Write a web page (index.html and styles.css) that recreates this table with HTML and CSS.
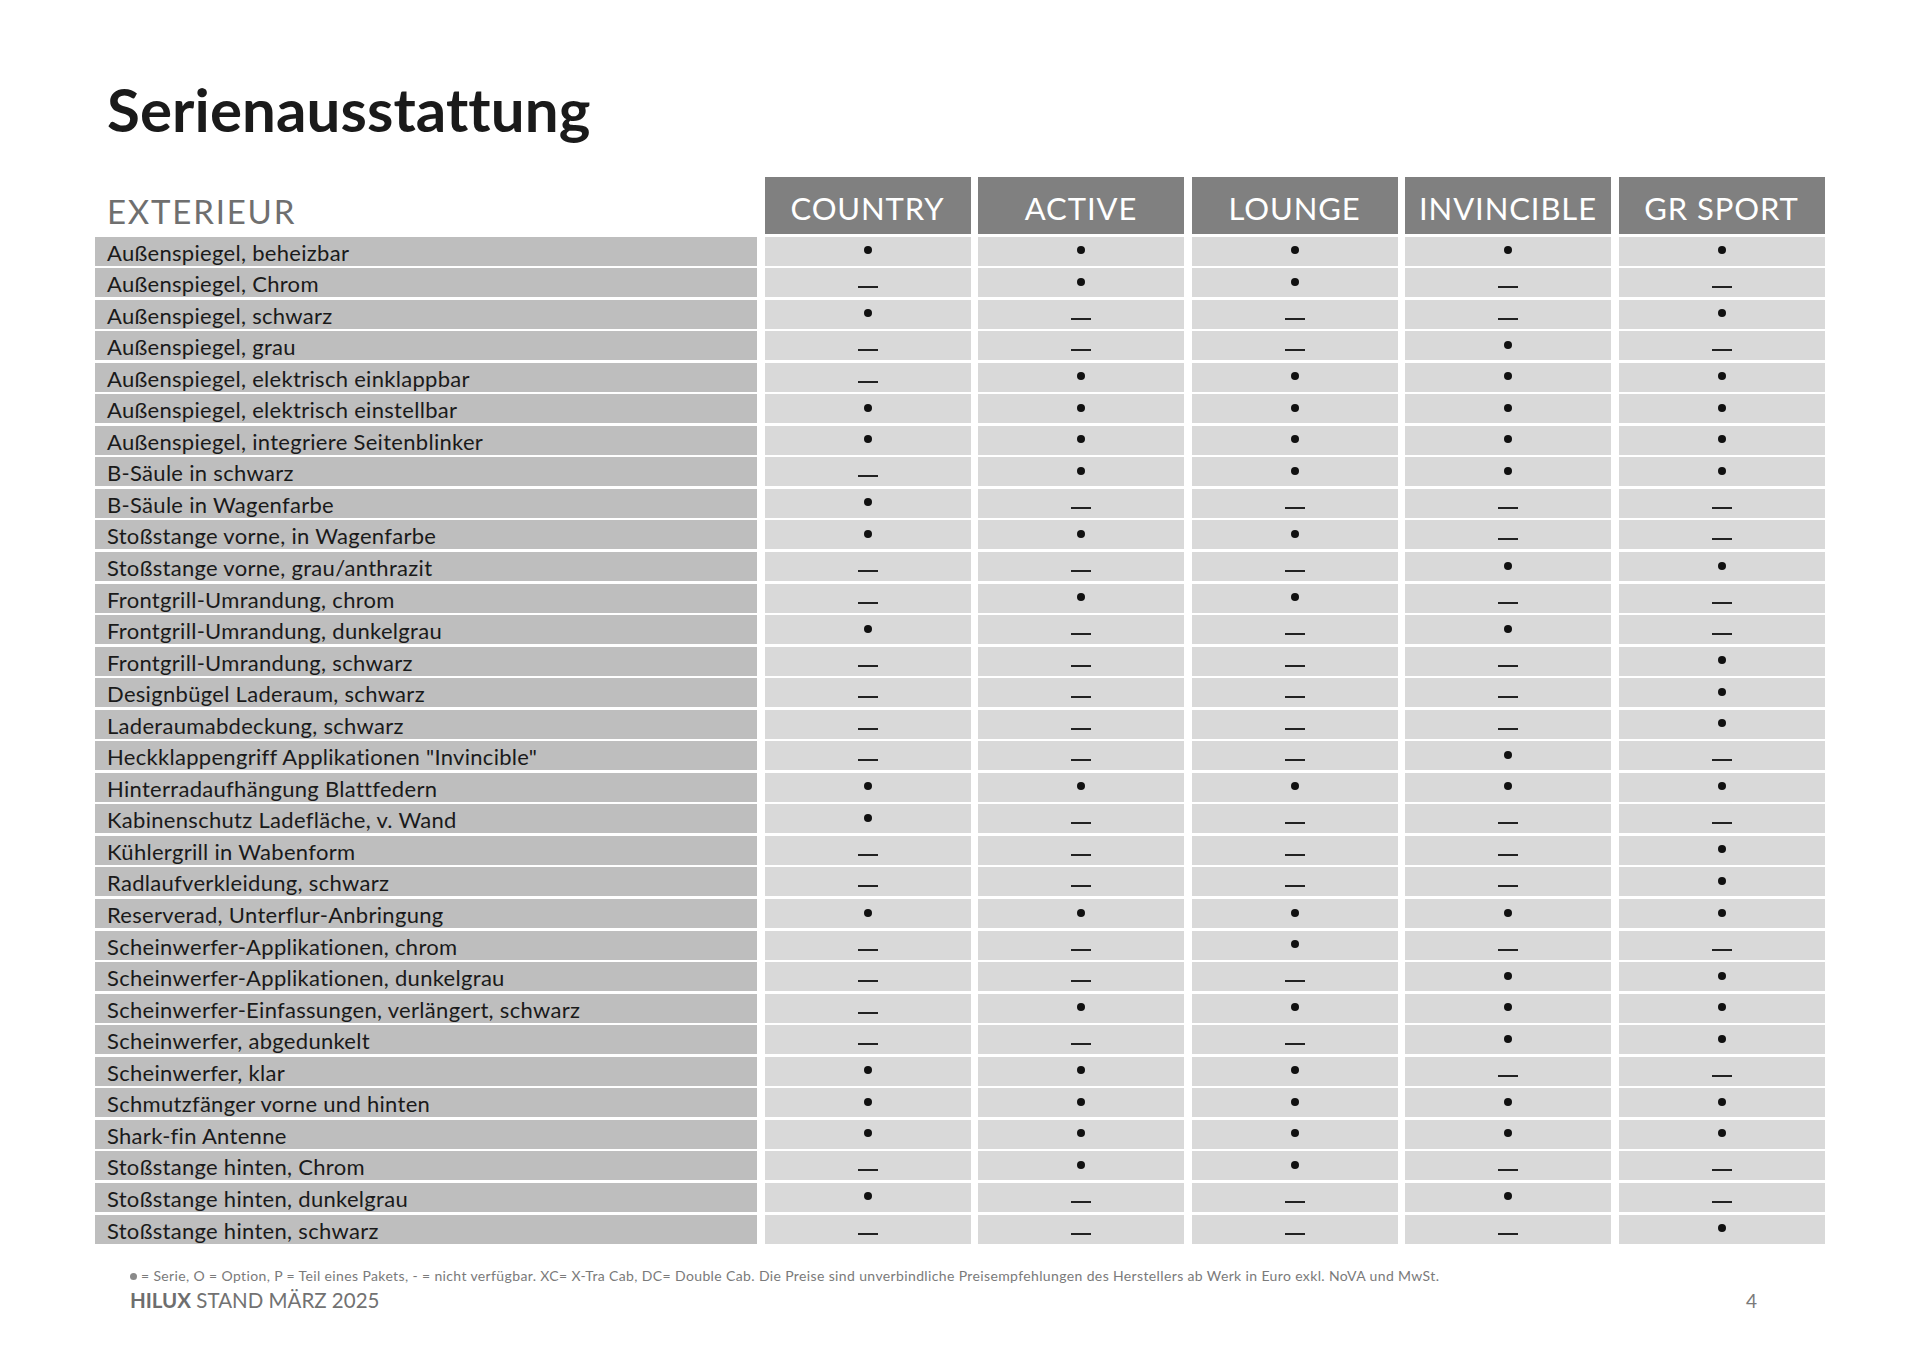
FILE: index.html
```html
<!DOCTYPE html>
<html lang="de">
<head>
<meta charset="utf-8">
<title>Serienausstattung</title>
<link rel="stylesheet" href="styles.css">
</head>
<body>
<main class="page">
  <h1 class="title">Serienausstattung</h1>
  <div class="table">
    <div class="head-label">EXTERIEUR</div>
    <div class="head">COUNTRY</div>
    <div class="head">ACTIVE</div>
    <div class="head">LOUNGE</div>
    <div class="head">INVINCIBLE</div>
    <div class="head">GR SPORT</div>

    <div class="label">Außenspiegel, beheizbar</div>
    <div class="cell"><span class="dot"></span></div><div class="cell"><span class="dot"></span></div><div class="cell"><span class="dot"></span></div><div class="cell"><span class="dot"></span></div><div class="cell"><span class="dot"></span></div>

    <div class="label">Außenspiegel, Chrom</div>
    <div class="cell"><span class="dash"></span></div><div class="cell"><span class="dot"></span></div><div class="cell"><span class="dot"></span></div><div class="cell"><span class="dash"></span></div><div class="cell"><span class="dash"></span></div>

    <div class="label">Außenspiegel, schwarz</div>
    <div class="cell"><span class="dot"></span></div><div class="cell"><span class="dash"></span></div><div class="cell"><span class="dash"></span></div><div class="cell"><span class="dash"></span></div><div class="cell"><span class="dot"></span></div>

    <div class="label">Außenspiegel, grau</div>
    <div class="cell"><span class="dash"></span></div><div class="cell"><span class="dash"></span></div><div class="cell"><span class="dash"></span></div><div class="cell"><span class="dot"></span></div><div class="cell"><span class="dash"></span></div>

    <div class="label">Außenspiegel, elektrisch einklappbar</div>
    <div class="cell"><span class="dash"></span></div><div class="cell"><span class="dot"></span></div><div class="cell"><span class="dot"></span></div><div class="cell"><span class="dot"></span></div><div class="cell"><span class="dot"></span></div>

    <div class="label">Außenspiegel, elektrisch einstellbar</div>
    <div class="cell"><span class="dot"></span></div><div class="cell"><span class="dot"></span></div><div class="cell"><span class="dot"></span></div><div class="cell"><span class="dot"></span></div><div class="cell"><span class="dot"></span></div>

    <div class="label">Außenspiegel, integriere Seitenblinker</div>
    <div class="cell"><span class="dot"></span></div><div class="cell"><span class="dot"></span></div><div class="cell"><span class="dot"></span></div><div class="cell"><span class="dot"></span></div><div class="cell"><span class="dot"></span></div>

    <div class="label">B-Säule in schwarz</div>
    <div class="cell"><span class="dash"></span></div><div class="cell"><span class="dot"></span></div><div class="cell"><span class="dot"></span></div><div class="cell"><span class="dot"></span></div><div class="cell"><span class="dot"></span></div>

    <div class="label">B-Säule in Wagenfarbe</div>
    <div class="cell"><span class="dot"></span></div><div class="cell"><span class="dash"></span></div><div class="cell"><span class="dash"></span></div><div class="cell"><span class="dash"></span></div><div class="cell"><span class="dash"></span></div>

    <div class="label">Stoßstange vorne, in Wagenfarbe</div>
    <div class="cell"><span class="dot"></span></div><div class="cell"><span class="dot"></span></div><div class="cell"><span class="dot"></span></div><div class="cell"><span class="dash"></span></div><div class="cell"><span class="dash"></span></div>

    <div class="label">Stoßstange vorne, grau/anthrazit</div>
    <div class="cell"><span class="dash"></span></div><div class="cell"><span class="dash"></span></div><div class="cell"><span class="dash"></span></div><div class="cell"><span class="dot"></span></div><div class="cell"><span class="dot"></span></div>

    <div class="label">Frontgrill-Umrandung, chrom</div>
    <div class="cell"><span class="dash"></span></div><div class="cell"><span class="dot"></span></div><div class="cell"><span class="dot"></span></div><div class="cell"><span class="dash"></span></div><div class="cell"><span class="dash"></span></div>

    <div class="label">Frontgrill-Umrandung, dunkelgrau</div>
    <div class="cell"><span class="dot"></span></div><div class="cell"><span class="dash"></span></div><div class="cell"><span class="dash"></span></div><div class="cell"><span class="dot"></span></div><div class="cell"><span class="dash"></span></div>

    <div class="label">Frontgrill-Umrandung, schwarz</div>
    <div class="cell"><span class="dash"></span></div><div class="cell"><span class="dash"></span></div><div class="cell"><span class="dash"></span></div><div class="cell"><span class="dash"></span></div><div class="cell"><span class="dot"></span></div>

    <div class="label">Designbügel Laderaum, schwarz</div>
    <div class="cell"><span class="dash"></span></div><div class="cell"><span class="dash"></span></div><div class="cell"><span class="dash"></span></div><div class="cell"><span class="dash"></span></div><div class="cell"><span class="dot"></span></div>

    <div class="label">Laderaumabdeckung, schwarz</div>
    <div class="cell"><span class="dash"></span></div><div class="cell"><span class="dash"></span></div><div class="cell"><span class="dash"></span></div><div class="cell"><span class="dash"></span></div><div class="cell"><span class="dot"></span></div>

    <div class="label">Heckklappengriff Applikationen "Invincible"</div>
    <div class="cell"><span class="dash"></span></div><div class="cell"><span class="dash"></span></div><div class="cell"><span class="dash"></span></div><div class="cell"><span class="dot"></span></div><div class="cell"><span class="dash"></span></div>

    <div class="label">Hinterradaufhängung Blattfedern</div>
    <div class="cell"><span class="dot"></span></div><div class="cell"><span class="dot"></span></div><div class="cell"><span class="dot"></span></div><div class="cell"><span class="dot"></span></div><div class="cell"><span class="dot"></span></div>

    <div class="label">Kabinenschutz Ladefläche, v. Wand</div>
    <div class="cell"><span class="dot"></span></div><div class="cell"><span class="dash"></span></div><div class="cell"><span class="dash"></span></div><div class="cell"><span class="dash"></span></div><div class="cell"><span class="dash"></span></div>

    <div class="label">Kühlergrill in Wabenform</div>
    <div class="cell"><span class="dash"></span></div><div class="cell"><span class="dash"></span></div><div class="cell"><span class="dash"></span></div><div class="cell"><span class="dash"></span></div><div class="cell"><span class="dot"></span></div>

    <div class="label">Radlaufverkleidung, schwarz</div>
    <div class="cell"><span class="dash"></span></div><div class="cell"><span class="dash"></span></div><div class="cell"><span class="dash"></span></div><div class="cell"><span class="dash"></span></div><div class="cell"><span class="dot"></span></div>

    <div class="label">Reserverad, Unterflur-Anbringung</div>
    <div class="cell"><span class="dot"></span></div><div class="cell"><span class="dot"></span></div><div class="cell"><span class="dot"></span></div><div class="cell"><span class="dot"></span></div><div class="cell"><span class="dot"></span></div>

    <div class="label">Scheinwerfer-Applikationen, chrom</div>
    <div class="cell"><span class="dash"></span></div><div class="cell"><span class="dash"></span></div><div class="cell"><span class="dot"></span></div><div class="cell"><span class="dash"></span></div><div class="cell"><span class="dash"></span></div>

    <div class="label">Scheinwerfer-Applikationen, dunkelgrau</div>
    <div class="cell"><span class="dash"></span></div><div class="cell"><span class="dash"></span></div><div class="cell"><span class="dash"></span></div><div class="cell"><span class="dot"></span></div><div class="cell"><span class="dot"></span></div>

    <div class="label">Scheinwerfer-Einfassungen, verlängert, schwarz</div>
    <div class="cell"><span class="dash"></span></div><div class="cell"><span class="dot"></span></div><div class="cell"><span class="dot"></span></div><div class="cell"><span class="dot"></span></div><div class="cell"><span class="dot"></span></div>

    <div class="label">Scheinwerfer, abgedunkelt</div>
    <div class="cell"><span class="dash"></span></div><div class="cell"><span class="dash"></span></div><div class="cell"><span class="dash"></span></div><div class="cell"><span class="dot"></span></div><div class="cell"><span class="dot"></span></div>

    <div class="label">Scheinwerfer, klar</div>
    <div class="cell"><span class="dot"></span></div><div class="cell"><span class="dot"></span></div><div class="cell"><span class="dot"></span></div><div class="cell"><span class="dash"></span></div><div class="cell"><span class="dash"></span></div>

    <div class="label">Schmutzfänger vorne und hinten</div>
    <div class="cell"><span class="dot"></span></div><div class="cell"><span class="dot"></span></div><div class="cell"><span class="dot"></span></div><div class="cell"><span class="dot"></span></div><div class="cell"><span class="dot"></span></div>

    <div class="label">Shark-fin Antenne</div>
    <div class="cell"><span class="dot"></span></div><div class="cell"><span class="dot"></span></div><div class="cell"><span class="dot"></span></div><div class="cell"><span class="dot"></span></div><div class="cell"><span class="dot"></span></div>

    <div class="label">Stoßstange hinten, Chrom</div>
    <div class="cell"><span class="dash"></span></div><div class="cell"><span class="dot"></span></div><div class="cell"><span class="dot"></span></div><div class="cell"><span class="dash"></span></div><div class="cell"><span class="dash"></span></div>

    <div class="label">Stoßstange hinten, dunkelgrau</div>
    <div class="cell"><span class="dot"></span></div><div class="cell"><span class="dash"></span></div><div class="cell"><span class="dash"></span></div><div class="cell"><span class="dot"></span></div><div class="cell"><span class="dash"></span></div>

    <div class="label">Stoßstange hinten, schwarz</div>
    <div class="cell"><span class="dash"></span></div><div class="cell"><span class="dash"></span></div><div class="cell"><span class="dash"></span></div><div class="cell"><span class="dash"></span></div><div class="cell"><span class="dot"></span></div>
  </div>

  <footer class="footer">
    <p class="note"><span class="note-dot"></span> = Serie, O = Option, P = Teil eines Pakets, - = nicht verfügbar. XC= X-Tra Cab, DC= Double Cab. Die Preise sind unverbindliche Preisempfehlungen des Herstellers ab Werk in Euro exkl. NoVA und MwSt.</p>
    <div class="foot-line">
      <span class="stand"><b>HILUX</b> STAND MÄRZ 2025</span>
      <span class="pageno">4</span>
    </div>
  </footer>
</main>
</body>
</html>
```

FILE: styles.css
```css
* { box-sizing: border-box; }

html, body {
  margin: 0;
  padding: 0;
  background: #ffffff;
}

body {
  font-family: Lato, "Open Sans", "Liberation Sans", sans-serif;
  color: #1c1c1c;
}

.page {
  width: 1920px;
  height: 1358px;
  padding: 0 0 0 95px;
}

.title {
  margin: 0;
  padding: 79px 0 0 12px;
  font-size: 60px;
  line-height: 60px;
  font-weight: 700;
  color: #1a1a1a;
  letter-spacing: 0.1px;
}

.table {
  margin-top: 38px;
  display: grid;
  grid-template-columns: 662px repeat(5, 206px);
  grid-template-rows: 57px repeat(32, 29px);
  column-gap: 7.5px;
  row-gap: 2.55px;
  width: 1730px;
}

.head-label {
  display: flex;
  align-items: flex-end;
  padding: 0 0 6px 12px;
  font-size: 33px;
  line-height: 33px;
  color: #6f6f6f;
  font-weight: 400;
  letter-spacing: 1.8px;
}

.head {
  background: #808080;
  color: #ffffff;
  display: flex;
  align-items: center;
  justify-content: center;
  font-size: 31px;
  line-height: 31px;
  padding-top: 6px;
  font-weight: 400;
  letter-spacing: 0.9px;
}

.label {
  background: #bebebe;
  display: flex;
  align-items: flex-end;
  padding: 0 0 2px 12px;
  font-size: 22px;
  line-height: 22px;
  letter-spacing: 0.3px;
  color: #1a1a1a;
  white-space: nowrap;
}

.cell {
  background: #d9d9d9;
  display: flex;
  align-items: center;
  justify-content: center;
}

.dot {
  width: 8px;
  height: 8px;
  border-radius: 50%;
  background: #111111;
  margin-top: -2px;
}

.dash {
  width: 20px;
  height: 2px;
  background: #222222;
  margin-top: 9px;
}

.footer {
  padding-left: 35px;
  color: #767676;
}

.note {
  margin: 24px 0 0 0;
  font-size: 14px;
  line-height: 16px;
  letter-spacing: 0.37px;
  color: #7a7a7a;
  white-space: nowrap;
}

.note-dot {
  display: inline-block;
  width: 7px;
  height: 7px;
  border-radius: 50%;
  background: #8a8a8a;
  vertical-align: 1px;
}

.foot-line {
  display: flex;
  justify-content: space-between;
  width: 1627px;
  margin-top: 4px;
  align-items: baseline;
}

.stand {
  font-size: 20.5px;
  line-height: 24px;
  color: #727272;
}

.stand b {
  font-weight: 700;
  color: #6e6e6e;
}

.pageno {
  font-size: 19px;
  color: #7a7a7a;
}
```
